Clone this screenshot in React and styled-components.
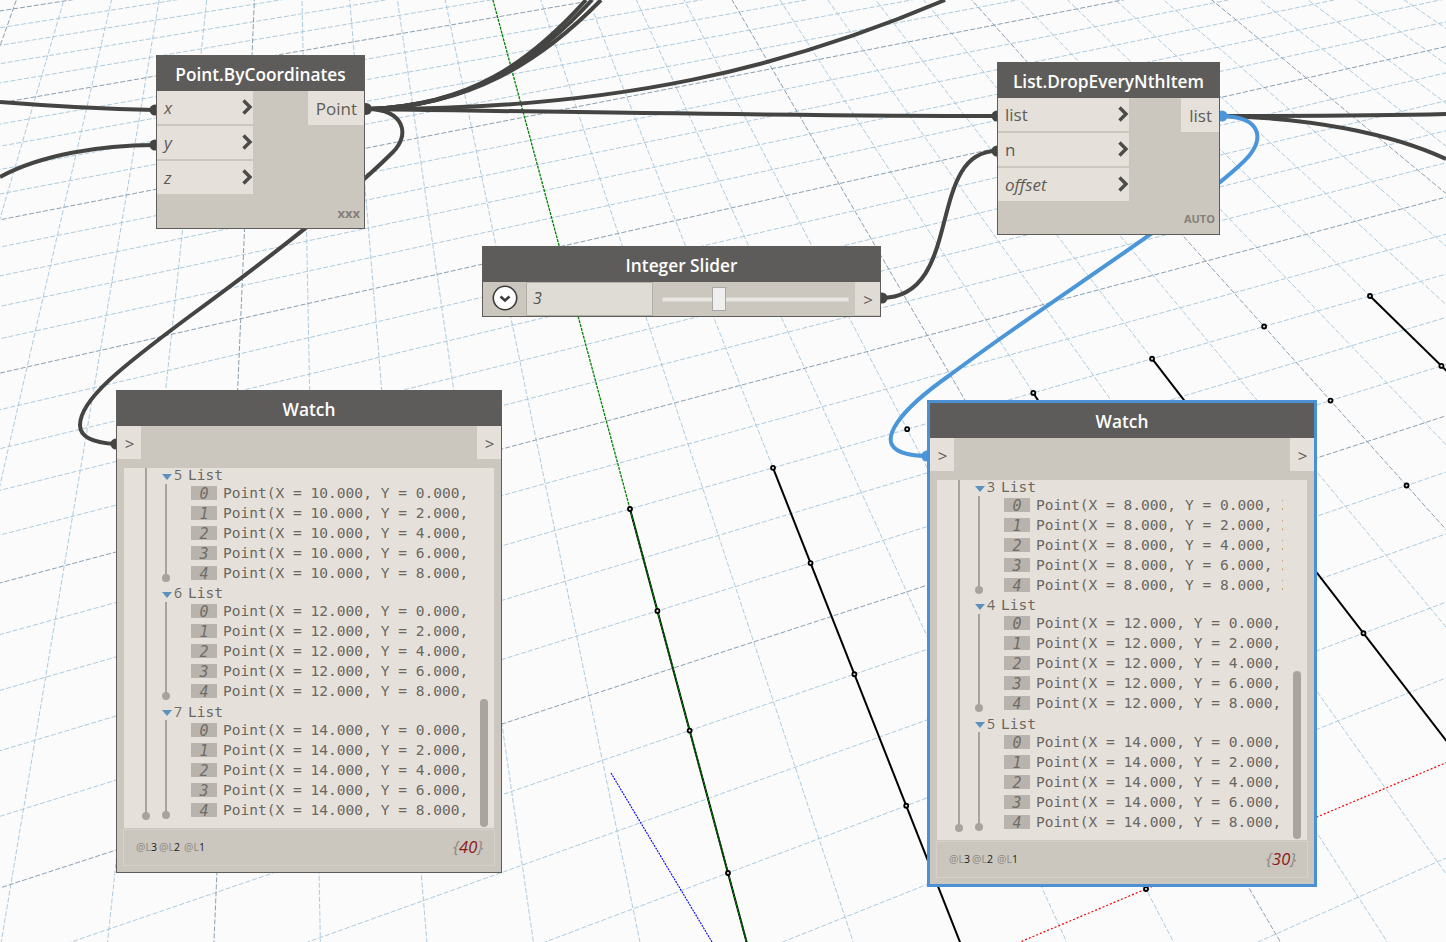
import React from 'react';
import styled, { createGlobalStyle } from 'styled-components';

const GlobalStyle = createGlobalStyle`
  html, body {
    margin: 0;
    padding: 0;
    background: #fbfbfb;
    font-family: "Open Sans", "Liberation Sans", sans-serif;
  }
`;

const Canvas = styled.div`
  position: relative;
  width: 1446px;
  height: 942px;
  overflow: hidden;
  background: #fbfbfb;
`;

const Backdrop = styled.svg`
  position: absolute;
  left: 0;
  top: 0;
`;

const Node = styled.div`
  position: absolute;
  left: ${(p) => p.$x}px;
  top: ${(p) => p.$y}px;
  width: ${(p) => p.$w}px;
  background: #cbc6be;
  border: ${(p) => (p.$selected ? '3px solid #4a90d2' : '1px solid #5f5d5a')};
  box-sizing: content-box;
`;

const Header = styled.div`
  height: 35px;
  box-sizing: border-box;
  padding-top: 2px;
  background: #5e5c5a;
  color: #fff;
  font-size: 17.3px;
  font-weight: 600;
  display: flex;
  align-items: center;
  justify-content: center;
`;

const Body = styled.div`
  display: flex;
  justify-content: space-between;
  align-items: flex-start;
`;

const InPorts = styled.div`
  display: flex;
  flex-direction: column;
  gap: 2px;
  width: ${(p) => p.$w}px;
`;

const Port = styled.div`
  height: 33px;
  box-sizing: border-box;
  background: #e5e1da;
  color: #5f5c58;
  font-size: 17px;
  font-style: ${(p) => (p.$optional ? 'italic' : 'normal')};
  display: flex;
  align-items: center;
  justify-content: space-between;
  padding: 0 0 0 7px;
`;

const OutPort = styled.div`
  height: 34px;
  box-sizing: border-box;
  background: #e5e1da;
  color: #5f5c58;
  font-size: 17px;
  display: flex;
  align-items: center;
  padding: 1px 7px 0 8px;
`;

const NodeFooter = styled.div`
  height: ${(p) => p.$h}px;
  box-sizing: border-box;
  display: flex;
  justify-content: flex-end;
  align-items: flex-end;
  padding: 0 4px 8px 0;
  color: #85817b;
  font-size: ${(p) => p.$size}px;
  line-height: 14px;
  font-weight: 700;
`;

const SliderBody = styled.div`
  display: flex;
  height: 34px;
`;

const ToggleCell = styled.div`
  width: 43px;
  box-sizing: border-box;
  padding-bottom: 3px;
  display: flex;
  align-items: center;
  justify-content: center;
`;

const ValueBox = styled.div`
  width: 127px;
  box-sizing: border-box;
  background: #dfdbd5;
  border: 1px solid #b3b0a8;
  color: #55524e;
  font-size: 16px;
  font-style: italic;
  display: flex;
  align-items: center;
  padding: 0 0 2px 6px;
`;

const Track = styled.div`
  position: relative;
  width: 202px;
  display: flex;
  align-items: center;
  padding: 0 6px 0 9px;
  box-sizing: border-box;
`;

const Rail = styled.div`
  flex: 1;
  height: 5px;
  background: #e9e6e1;
  border: 1px solid #d9d6d0;
  box-sizing: border-box;
`;

const Thumb = styled.div`
  position: absolute;
  left: ${(p) => p.$left}px;
  top: 5px;
  width: 14px;
  height: 24px;
  box-sizing: border-box;
  background: #efefef;
  border: 1px solid #aaa8a3;
`;

const ArrowCell = styled.div`
  width: ${(p) => p.$w}px;
  height: 33px;
  box-sizing: border-box;
  padding: 1px 0 0 1px;
  background: ${(p) => p.$bg || '#e5e1da'};
  color: #5f5c58;
  font-size: 17px;
  display: flex;
  align-items: center;
  justify-content: center;
`;

const WatchPorts = styled.div`
  display: flex;
  justify-content: space-between;
  margin-bottom: 9px;
`;

const ListPanel = styled.div`
  position: relative;
  height: 360px;
  margin: 0 7px;
  background: #e5e1da;
  overflow: hidden;
  font-family: "DejaVu Sans Mono", "Liberation Mono", monospace;
  font-size: 14.55px;
  color: #6b6761;
`;

const Tree = styled.div`
  position: relative;
  height: 350px;
  margin: -2px 0 0 21px;
  border-left: 2px solid #a8a49d;
  &::after {
    content: '';
    position: absolute;
    left: -5px;
    bottom: -4px;
    width: 8px;
    height: 8px;
    border-radius: 50%;
    background: #a8a49d;
  }
`;

const GroupHead = styled.div`
  height: 17px;
  display: flex;
  align-items: center;
  padding-left: 15px;
  white-space: pre;
`;

const Group = styled.div`
  position: relative;
  margin-bottom: 1px;
  &:last-child ${GroupHead} {
    height: 18px;
  }
  &::before {
    content: '';
    position: absolute;
    left: 18px;
    top: 18px;
    bottom: 5px;
    width: 2px;
    background: #a8a49d;
  }
  &::after {
    content: '';
    position: absolute;
    left: 15px;
    bottom: 1px;
    width: 8px;
    height: 8px;
    border-radius: 50%;
    background: #a8a49d;
  }
`;

const Triangle = styled.span`
  width: 0;
  height: 0;
  border-left: 5px solid transparent;
  border-right: 5px solid transparent;
  border-top: 6px solid #5c91bf;
  margin: 4px 2px 0 0;
`;

const GroupNumber = styled.span`
  font-family: "Open Sans", sans-serif;
  font-size: 14px;
  width: 14px;
`;

const Row = styled.div`
  height: 20px;
  display: flex;
  align-items: center;
  padding-left: 44px;
`;

const IndexBox = styled.span`
  width: 26px;
  height: 14px;
  margin-right: 6px;
  background: #b8b4ad;
  color: #706c66;
  font-style: italic;
  font-size: 15px;
  line-height: 16px;
  text-align: center;
  flex: none;
`;

const RowText = styled.span`
  width: 247px;
  margin-bottom: 2px;
  overflow: hidden;
  white-space: pre;
  flex: none;
`;

const ScrollThumb = styled.div`
  position: absolute;
  right: 6px;
  bottom: 1px;
  width: 8px;
  height: ${(p) => p.$h}px;
  border-radius: 4px;
  background: #a9a59e;
`;

const WatchFooter = styled.div`
  height: 37px;
  margin: 1px 6px 6px;
  box-sizing: border-box;
  border: 1px solid #d6d2cb;
  display: flex;
  align-items: center;
  justify-content: space-between;
  padding: 0 11px 2px 12px;
`;

const Levels = styled.div`
  display: flex;
  gap: 3px;
  font-size: 10.5px;
  color: #1c1c1c;
`;

const Level = styled.span`
  width: ${(p) => p.$w}px;
  &::first-letter {
    color: #8d8982;
  }
`;

const Count = styled.div`
  font-size: 16.5px;
  font-style: italic;
  color: #8d8982;
  span {
    color: #8b1a1a;
  }
`;

const ChevronIcon = styled.svg`
  margin-top: -1px;
`;

// solves the grid projection from four known points on the canvas
function solveProjection(pairs) {
  const m = [];
  pairs.forEach(([[x, y], [u, v]]) => {
    m.push([x, y, 1, 0, 0, 0, -u * x, -u * y, u]);
    m.push([0, 0, 0, x, y, 1, -v * x, -v * y, v]);
  });
  for (let i = 0; i < 8; i++) {
    let best = i;
    for (let r = i + 1; r < 8; r++) {
      if (Math.abs(m[r][i]) > Math.abs(m[best][i])) best = r;
    }
    [m[i], m[best]] = [m[best], m[i]];
    for (let r = 0; r < 8; r++) {
      if (r === i) continue;
      const f = m[r][i] / m[i][i];
      for (let c = i; c < 9; c++) m[r][c] -= f * m[i][c];
    }
  }
  return m.map((row, i) => row[8] / row[i]);
}

const H = solveProjection([
  [[0, 2], [728, 873]],
  [[0, 8], [630, 509]],
  [[12, 8], [1370, 296]],
  [[4, 0], [1146, 889]],
]);

const depth = (x, y) => H[6] * x + H[7] * y + 1;
const project = (x, y) => {
  const w = depth(x, y);
  return [(H[0] * x + H[1] * y + H[2]) / w, (H[3] * x + H[4] * y + H[5]) / w];
};

const range = (a, b, step = 1) => {
  const out = [];
  for (let i = a; i <= b; i += step) out.push(i);
  return out;
};

function gridSegment(points) {
  const ok = points.filter(([x, y]) => depth(x, y) > 0.15);
  if (ok.length < 2) return null;
  return [project(...ok[0]), project(...ok[ok.length - 1])];
}

const gridLines = [];
range(-50, 50).forEach((n) => {
  gridLines.push({ n, seg: gridSegment(range(-50, 50).map((t) => [n, t])) });
  gridLines.push({ n, seg: gridSegment(range(-50, 50).map((t) => [t, n])) });
});

const dataXs = range(0, 14, 2);
const dataYs = range(0, 8, 2);
const drawnXs = [0, 2, 6, 8, 12, 14]; // every third column is dropped

const WIRE = '#444443';
const BLUE = '#4a96d8';

const greyWires = [
  'M0 102 C50 106 100 109 155 110',
  'M0 177 C40 155 100 145 155 145',
  'M368 109 C470 106 530 62 586 0',
  'M368 109 C470 106 535 62 592 0',
  'M368 109 C470 106 540 62 601 0',
  'M368 109 C620 110 790 66 945 0',
  'M368 109 C570 112 800 116 997 116',
  'M368 109 C405 110 410 135 393 152 C350 195 280 250 190 316 C120 368 80 400 80 425 C80 438 95 443 116 444',
  'M881 298 C965 298 925 151 997 151',
  'M1222 116 C1300 116 1370 116 1446 114',
  'M1222 116 C1310 118 1390 133 1446 159',
];

const greyEnds = [[155, 110, 5.5], [155, 145, 5.5], [116, 444, 5.5], [366, 109, 6], [997, 116, 5.5], [997, 151, 5.5], [882, 298, 5.5]];

function Scene() {
  return (
    <Backdrop width="1446" height="942" viewBox="0 0 1446 942">
      {gridLines.filter((l) => l.seg && l.n % 5 !== 0).map((l, i) => (
        <line key={i} x1={l.seg[0][0]} y1={l.seg[0][1]} x2={l.seg[1][0]} y2={l.seg[1][1]} stroke="#adcbdf" strokeWidth="1" strokeDasharray="5 2" />
      ))}
      {gridLines.filter((l) => l.seg && l.n % 5 === 0 && l.n !== 0).map((l, i) => (
        <line key={i} x1={l.seg[0][0]} y1={l.seg[0][1]} x2={l.seg[1][0]} y2={l.seg[1][1]} stroke="#8a9fb2" strokeWidth="1" strokeDasharray="5 2" />
      ))}
      {drawnXs.map((x) => {
        const a = project(x, 0);
        const b = project(x, 8);
        return <line key={x} x1={a[0]} y1={a[1]} x2={b[0]} y2={b[1]} stroke="#000" strokeWidth="2" />;
      })}
      <line x1={project(0, 0)[0]} y1={project(0, 0)[1]} x2={project(0, 45)[0]} y2={project(0, 45)[1]} stroke="#008000" strokeWidth="1.3" strokeDasharray="3 1" />
      <line x1={project(0, 0)[0]} y1={project(0, 0)[1]} x2={project(45, 0)[0]} y2={project(45, 0)[1]} stroke="#f00000" strokeWidth="1.2" strokeDasharray="2 2" />
      <line x1="611" y1="773" x2="712" y2="942" stroke="#0000ff" strokeWidth="1.1" strokeDasharray="2 1" />
      {dataXs.map((x) => dataYs.map((y) => {
        const [cx, cy] = project(x, y);
        return <circle key={`${x}-${y}`} cx={cx} cy={cy} r="2" fill="#e8e8e8" stroke="#000" strokeWidth="1.8" />;
      }))}
      {greyWires.map((d) => (
        <path key={d} d={d} fill="none" stroke={WIRE} strokeWidth="4" />
      ))}
      {greyEnds.map(([cx, cy, r]) => (
        <circle key={`${cx}-${cy}`} cx={cx} cy={cy} r={r} fill={WIRE} />
      ))}
      <path d="M1222 116 C1262 117 1268 140 1240 165 C1180 220 1050 300 950 375 C897 412 880 440 897 450 C905 455 920 456 930 456" fill="none" stroke={BLUE} strokeWidth="4" />
      <circle cx="1222" cy="116" r="5.5" fill={BLUE} />
      <circle cx="927" cy="456" r="5.5" fill={BLUE} />
    </Backdrop>
  );
}

function Chevron() {
  return (
    <ChevronIcon width="12" height="18" viewBox="0 0 12 18">
      <path d="M2.5 2.5 L9 9 L2.5 15.5" fill="none" stroke="#4c4b49" strokeWidth="3.4" />
    </ChevronIcon>
  );
}

function ToggleIcon() {
  return (
    <svg width="26" height="26" viewBox="0 0 26 26">
      <circle cx="13" cy="13" r="11.7" fill="#fff" stroke="#3c3c3c" strokeWidth="1.6" />
      <path d="M8.5 11.5 L13 15.5 L17.5 11.5" fill="none" stroke="#3c3c3c" strokeWidth="2.6" />
    </svg>
  );
}

function CodeNode({ x, y, w, title, inputs, inWidth, output, lacing, lacingSize, footerHeight }) {
  return (
    <Node $x={x} $y={y} $w={w}>
      <Header>{title}</Header>
      <Body>
        <InPorts $w={inWidth}>
          {inputs.map((p) => (
            <Port key={p.name} $optional={p.optional}>
              {p.name}
              <Chevron />
            </Port>
          ))}
        </InPorts>
        <OutPort>{output}</OutPort>
      </Body>
      <NodeFooter $h={footerHeight} $size={lacingSize}>{lacing}</NodeFooter>
    </Node>
  );
}

const point = (x, y) => {
  const fx = x.toFixed(3);
  const fy = y.toFixed(3);
  return `Point(X = ${fx}, Y = ${fy}, Z = 0.000)`;
};

function WatchNode({ x, y, selected, groups, total, thumb }) {
  return (
    <Node $x={x} $y={y} $w={384} $selected={selected}>
      <Header>Watch</Header>
      <WatchPorts>
        <ArrowCell $w={24}>&gt;</ArrowCell>
        <ArrowCell $w={24}>&gt;</ArrowCell>
      </WatchPorts>
      <ListPanel>
        <Tree>
          {groups.map((g) => (
            <Group key={g.index}>
              <GroupHead>
                <Triangle />
                <GroupNumber>{g.index}</GroupNumber>
                List
              </GroupHead>
              {dataYs.map((py, i) => (
                <Row key={py}>
                  <IndexBox>{i}</IndexBox>
                  <RowText>{point(g.x, py)}</RowText>
                </Row>
              ))}
            </Group>
          ))}
        </Tree>
        <ScrollThumb $h={thumb} />
      </ListPanel>
      <WatchFooter>
        <Levels>
          <Level $w={20}>@L3</Level>
          <Level $w={22}>@L2</Level>
          <Level $w={20}>@L1</Level>
        </Levels>
        <Count>{'{'}<span>{total}</span>{'}'}</Count>
      </WatchFooter>
    </Node>
  );
}

function SliderNode() {
  return (
    <Node $x={482} $y={246} $w={397}>
      <Header>Integer Slider</Header>
      <SliderBody>
        <ToggleCell><ToggleIcon /></ToggleCell>
        <ValueBox>3</ValueBox>
        <Track>
          <Rail />
          <Thumb $left={59} />
        </Track>
        <ArrowCell $w={25} $bg="#e0dcd5">&gt;</ArrowCell>
      </SliderBody>
    </Node>
  );
}

export default function App() {
  return (
    <Canvas>
      <GlobalStyle />
      <Scene />
      <CodeNode
        x={156}
        y={55}
        w={207}
        title="Point.ByCoordinates"
        inWidth={96}
        output="Point"
        lacing="xxx"
        lacingSize={13}
        footerHeight={34}
        inputs={[{ name: 'x', optional: true }, { name: 'y', optional: true }, { name: 'z', optional: true }]}
      />
      <CodeNode
        x={997}
        y={62}
        w={221}
        title="List.DropEveryNthItem"
        inWidth={131}
        output="list"
        lacing="AUTO"
        lacingSize={11}
        footerHeight={33}
        inputs={[{ name: 'list' }, { name: 'n' }, { name: 'offset', optional: true }]}
      />
      <SliderNode />
      <WatchNode
        x={116}
        y={390}
        total={40}
        thumb={128}
        groups={[{ index: 5, x: 10 }, { index: 6, x: 12 }, { index: 7, x: 14 }]}
      />
      <WatchNode
        x={927}
        y={400}
        selected
        total={30}
        thumb={168}
        groups={[{ index: 3, x: 8 }, { index: 4, x: 12 }, { index: 5, x: 14 }]}
      />
    </Canvas>
  );
}
